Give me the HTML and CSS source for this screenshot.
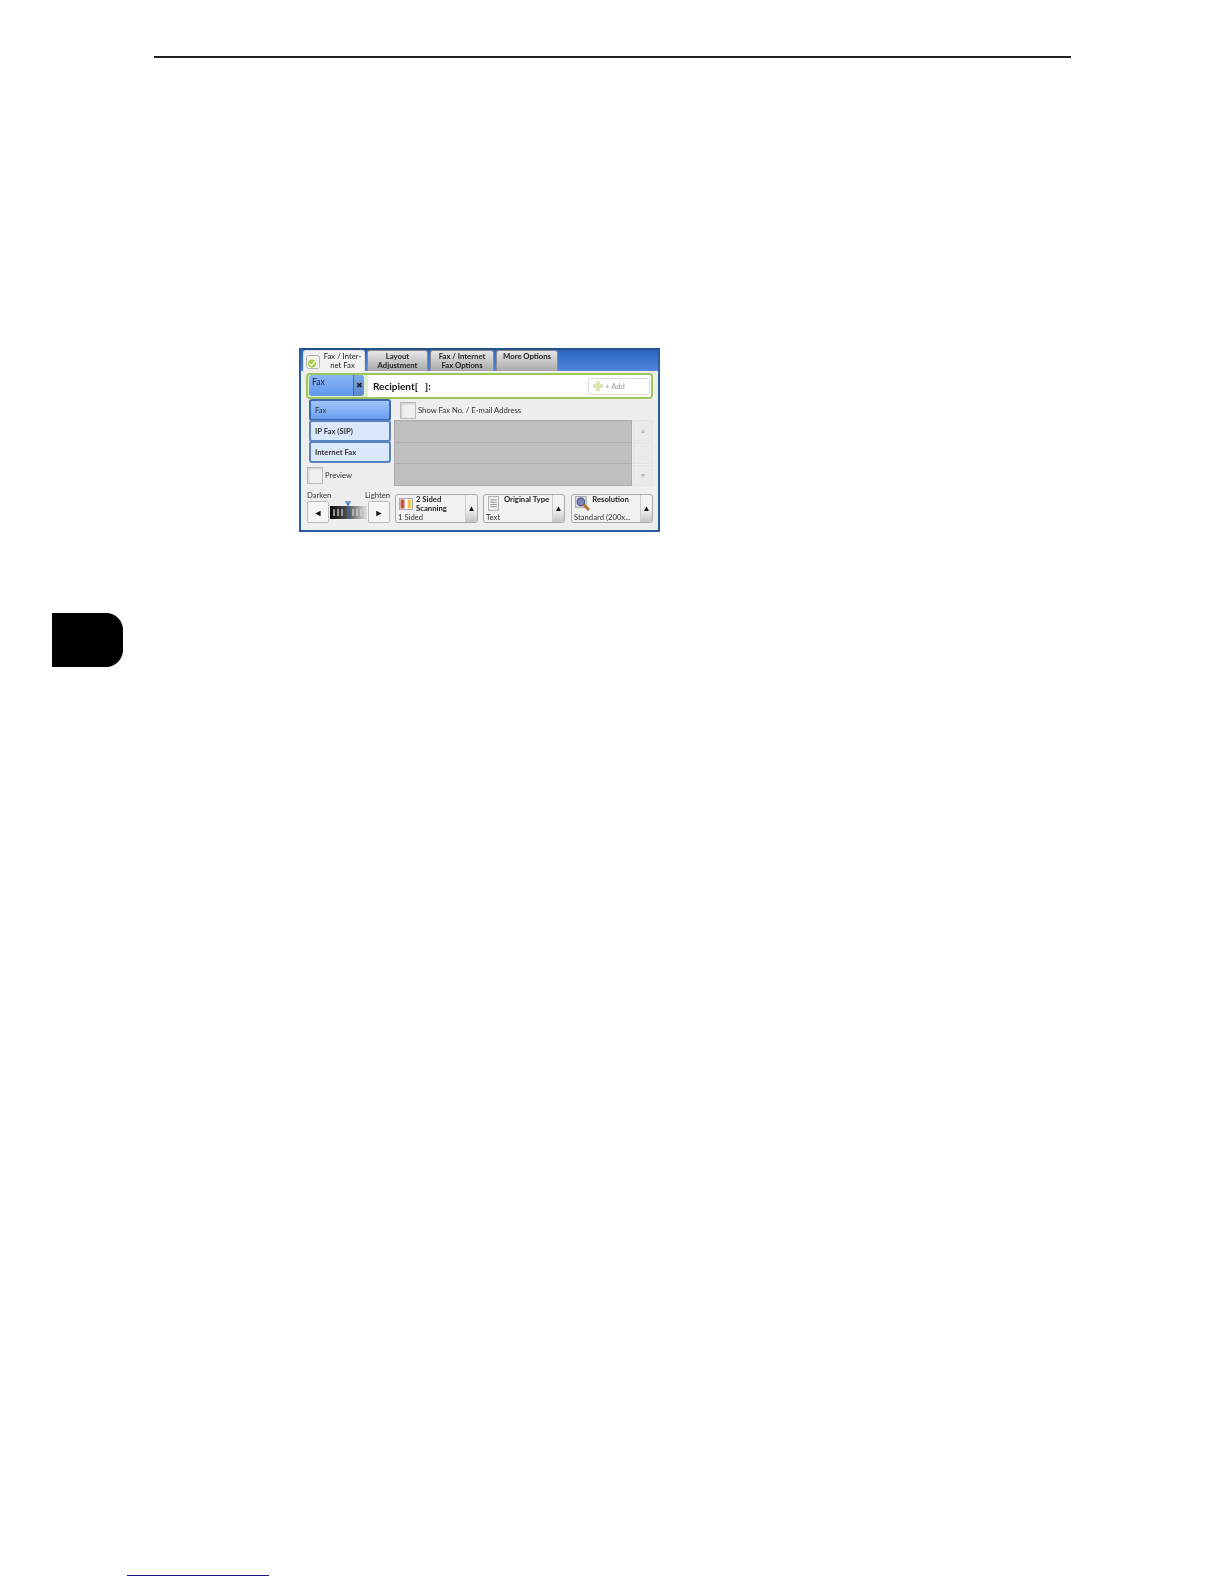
FILE: index.html
```html
<!DOCTYPE html>
<html lang="en">
<head>
<meta charset="utf-8">
<title>Fax / Internet Fax</title>
<link rel="stylesheet" href="styles.css">
</head>
<body>
<div class="page-rule"></div>
<section class="panel">
  <nav class="tabs">
    <div class="tab tab-active">
      <svg class="tab-icon" viewBox="0 0 14 14"><rect x=".5" y=".5" width="13" height="13" rx="2" fill="#f4f4ee" stroke="#b5b5b5"/><circle cx="6" cy="8.500" r="4" fill="#a9cc4a"/><path d="M3.500 8.500l2 2 5-6" fill="none" stroke="#eef5d8" stroke-width="1.200"/></svg>
      <span>Fax / Inter-<br>net Fax</span>
    </div>
    <div class="tab tab-w2"><span>Layout<br>Adjustment</span></div>
    <div class="tab tab-w3"><span>Fax / Internet<br>Fax Options</span></div>
    <div class="tab tab-w4"><span>More Options</span></div>
  </nav>
  <div class="content">
    <div class="recipient-bar">
      <div class="fax-select">Fax</div>
      <div class="fax-close">✖</div>
      <div class="recipient-field">
        <span class="recipient-label">Recipient[&nbsp;&nbsp;&nbsp;]:</span>
        <div class="add-btn">
          <svg class="add-icon" viewBox="0 0 12 12"><path d="M4 1h4v3h3v4H8v3H4V8H1V4h3z" fill="#dbe6b4"/></svg>
          <span>+ Add</span>
        </div>
      </div>
    </div>
    <div class="main">
      <div class="left">
        <ul class="menu">
          <li class="menu-item menu-selected">Fax</li>
          <li class="menu-item">IP Fax (SIP)</li>
          <li class="menu-item">Internet Fax</li>
        </ul>
        <div class="check-row preview-row"><span class="check"></span><span>Preview</span></div>
      </div>
      <div class="right">
        <div class="check-row show-row"><span class="check"></span><span>Show Fax No. / E-mail Address</span></div>
        <div class="list-wrap">
          <div class="list"><div class="list-row"></div><div class="list-row"></div><div class="list-row"></div></div>
          <div class="scroll">
            <div class="scroll-btn">▲</div>
            <div class="scroll-btn"></div>
            <div class="scroll-btn">▼</div>
          </div>
        </div>
      </div>
    </div>
    <div class="bottom">
      <div class="density">
        <div class="density-labels"><span>Darken</span><span>Lighten</span></div>
        <div class="density-ctrl">
          <div class="step">◄</div>
          <div class="gauge">
            <svg class="gauge-svg" viewBox="0 0 39 22">
              <defs><linearGradient id="g"><stop offset="0" stop-color="#0a0a0a"/><stop offset=".5" stop-color="#555"/><stop offset="1" stop-color="#e2e2e2"/></linearGradient></defs>
              <rect x="1" y="5" width="37" height="13" fill="url(#g)"/>
              <path d="M5 8v7M9 8v7M13 8v7M24 8v7M28 8v7M32 8v7" stroke="#ddd" stroke-width="1.200"/>
              <path d="M15.500 0h7l-2.500 4h-2z" fill="#6f9fd0"/><path d="M19 2v16" stroke="#2f6fbe" stroke-width="1.300"/>
            </svg>
          </div>
          <div class="step">►</div>
        </div>
      </div>
      <div class="feature feature-a">
        <div class="feature-main">
          <div class="feature-top">
            <svg class="feature-icon" viewBox="0 0 14 12"><rect x=".5" y=".5" width="13" height="11" fill="#fff" stroke="#aaa"/><rect x="1.500" y="1.500" width="4" height="9" fill="#c0533c"/><rect x="8.500" y="1.500" width="4" height="9" fill="#edc75c"/></svg>
            <span class="feature-title">2 Sided<br>Scanning</span>
          </div>
          <span class="feature-value">1 Sided</span>
        </div>
        <div class="feature-arrow">▲</div>
      </div>
      <div class="feature feature-b">
        <div class="feature-main">
          <div class="feature-top">
            <svg class="feature-icon-doc" viewBox="0 0 12 16"><rect x=".5" y=".5" width="11" height="15" fill="#f2f2f2" stroke="#aaa"/><path d="M2.500 4h7M2.500 6.500h7M2.500 9h7M2.500 11.500h7" stroke="#888"/></svg>
            <span class="feature-title feature-title-center">Original Type</span>
          </div>
          <span class="feature-value">Text</span>
        </div>
        <div class="feature-arrow">▲</div>
      </div>
      <div class="feature feature-c">
        <div class="feature-main">
          <div class="feature-top">
            <svg class="feature-icon-res" viewBox="0 0 14 14"><rect x=".5" y=".5" width="10" height="10" fill="#d9dbe6" stroke="#aaa"/><circle cx="5.500" cy="5.500" r="3.500" fill="#7d82b8" stroke="#4d5288"/><path d="M8 8l5 5" stroke="#b5752a" stroke-width="2.600"/></svg>
            <span class="feature-title feature-title-center feature-title-shift">Resolution</span>
          </div>
          <span class="feature-value">Standard (200x...</span>
        </div>
        <div class="feature-arrow">▲</div>
      </div>
    </div>
  </div>
</section>
<div class="chapter-tab"></div>
<div class="footer-link"></div>
</body>
</html>
```
FILE: styles.css
```css
* { box-sizing: border-box; }
html, body { margin: 0; padding: 0; background: #fff; }
body { width: 1224px; height: 1584px; overflow: hidden; font-family: Lato, "Open Sans", sans-serif; color: #222; }

.page-rule { height: 2px; margin: 56px 153px 0 154px; background: #222; }

.panel { width: 361px; height: 184px; margin: 290px 0 0 299px; border: 2px solid #2c5d9e; border-top-color: #24508c; background: #eee; display: flex; flex-direction: column; font-size: 7.700px; line-height: 9px; filter: blur(.35px); }

.tabs { height: 21px; flex: none; padding: 0 0 0 2px; display: flex; gap: 2px; background: linear-gradient(#2c66bf, #4f86dc); }
.tab { width: 61px; height: 21px; padding-top: 1px; text-align: center; white-space: nowrap; border-radius: 3px 3px 0 0; background: linear-gradient(#e6e6e6, #a9a9a9); font-weight: 700; border: 1px solid #8b8b8b; border-bottom: 0; }
.tab-active { width: 62px; height: 22px; background: #f1f1f1; display: flex; align-items: center; padding: 0 0 2px 2px; gap: 1px; border-color: #ddd; position: relative; z-index: 1; }
.tab-active span { flex: 1; font-weight: 400; }
.tab-icon { width: 14px; height: 14px; flex: none; margin-top: 3px; }
.tab-w3 { width: 64px; }
.tab-w4 { width: 62px; }

.content { flex: 1; min-height: 0; padding: 2px 5px 0; display: flex; flex-direction: column; }

.recipient-bar { height: 26px; flex: none; border: 2px solid #9cc75a; border-radius: 4px; background: #e3efd0; display: flex; align-items: stretch; padding-left: 1px; }
.fax-select { width: 44px; padding: 3px 0 0 3px; background: linear-gradient(#8ab8f6, #5f97ea); border-radius: 3px 0 0 3px; color: #223; font-size: 8.500px; margin-bottom: 1px; }
.fax-close { width: 11px; margin: 0 4px 1px 0; background: linear-gradient(#7ea8e4, #5a89d2); border-left: 1px solid #3d68ad; border-radius: 0 3px 3px 0; display: flex; align-items: center; justify-content: center; font-size: 8px; color: #223; }
.recipient-field { flex: 1; background: #fff; border-radius: 2px; display: flex; align-items: center; justify-content: space-between; padding: 0 1px 0 5px; }
.recipient-label { font-size: 10px; font-weight: 700; color: #111; }
.add-btn { width: 62px; height: 17px; border: 1px solid #ddd; border-radius: 3px; display: flex; align-items: center; padding-left: 3px; gap: 1px; color: #999; font-size: 7.700px; }
.add-icon { width: 12px; height: 12px; }

.main { display: flex; gap: 3px; flex: none; }
.left { width: 85px; flex: none; }
.right { flex: 1; min-width: 0; }

.menu { list-style: none; margin: 0 0 0 3px; padding: 0; width: 82px; }
.menu-item { height: 22px; margin-bottom: -1px; padding-left: 4px; display: flex; align-items: center; border: 2px solid #5b83c2; border-radius: 3px; background: #dbe8fc; color: #333; font-weight: 700; }
.menu-selected { background: linear-gradient(#a0c4fa, #6a9ff0); border-color: #3d68ad; font-weight: 400; }

.check-row { display: flex; align-items: center; gap: 2px; color: #333; }
.check { width: 16px; height: 17px; flex: none; background: #f0f0f0; border: 1px solid #bbb; box-shadow: inset 1px 1px 2px #ccc; }
.preview-row { margin: 5px 0 0 1px; }
.show-row { height: 21px; padding: 3px 0 1px 6px; }

.list-wrap { display: flex; gap: 1px; height: 66px; }
.list { flex: 1; display: flex; flex-direction: column; background: #bfbfbf; border: 1px solid #aaa; }
.list-row { flex: 1; border-bottom: 1px solid #aeaeae; }
.list-row:last-child { border-bottom: 0; }
.scroll { width: 20px; display: flex; flex-direction: column; gap: 1px; }
.scroll-btn { flex: 1; display: flex; align-items: center; justify-content: center; color: #bbb; font-size: 7px; background: #eaeaea; border: 1px solid #e4e4e4; }

.bottom { display: flex; margin-top: 4px; gap: 5px; flex: none; }
.density { width: 83px; margin-left: 1px; flex: none; }
.density-labels { display: flex; justify-content: space-between; height: 11px; padding-top: 1px; color: #333; }
.density-ctrl { display: flex; align-items: stretch; height: 22px; }
.step { width: 22px; flex: none; display: flex; align-items: center; justify-content: center; background: #f5f5f5; border: 1px solid #bbb; border-radius: 2px; font-size: 9px; color: #111; }
.gauge { flex: 1; }
.gauge-svg { display: block; width: 39px; height: 22px; }

.feature { height: 29px; margin-top: 4px; flex: none; display: flex; border: 1px solid #aaa; border-radius: 3px; background: #f2f2f2; }
.feature-a { width: 83px; }
.feature-b { width: 82px; }
.feature-c { width: 82px; margin-left: 1px; }
.feature-main { flex: 1; min-width: 0; display: flex; flex-direction: column; justify-content: space-between; padding: 0 0 0 2px; }
.feature-top { display: flex; gap: 2px; }
.feature-icon { width: 14px; height: 12px; margin: 3px 1px 0 1px; flex: none; }
.feature-icon-doc { width: 11px; height: 15px; margin: 1px 0 -7px 2px; flex: none; }
.feature-icon-res { width: 15px; height: 15px; margin: 1px 0 -7px 1px; flex: none; }
.feature-title { font-weight: 700; color: #222; white-space: nowrap; }
.feature-title-center { flex: 1; text-align: center; }
.feature-title-shift { padding-right: 11px; }
.feature-value { white-space: nowrap; color: #333; }
.feature-arrow { width: 12px; flex: none; display: flex; align-items: center; justify-content: center; font-size: 8px; color: #111; border-left: 1px solid #ccc; border-radius: 0 3px 3px 0; background: linear-gradient(#f2f2f2 50%, #c4c4c4); }

.chapter-tab { width: 71px; height: 54px; margin: 81px 0 0 52px; background: #000; border-radius: 0 17px 17px 0; }
.footer-link { width: 142px; height: 1px; margin: 908px 0 0 127px; background: #14148c; }
```
